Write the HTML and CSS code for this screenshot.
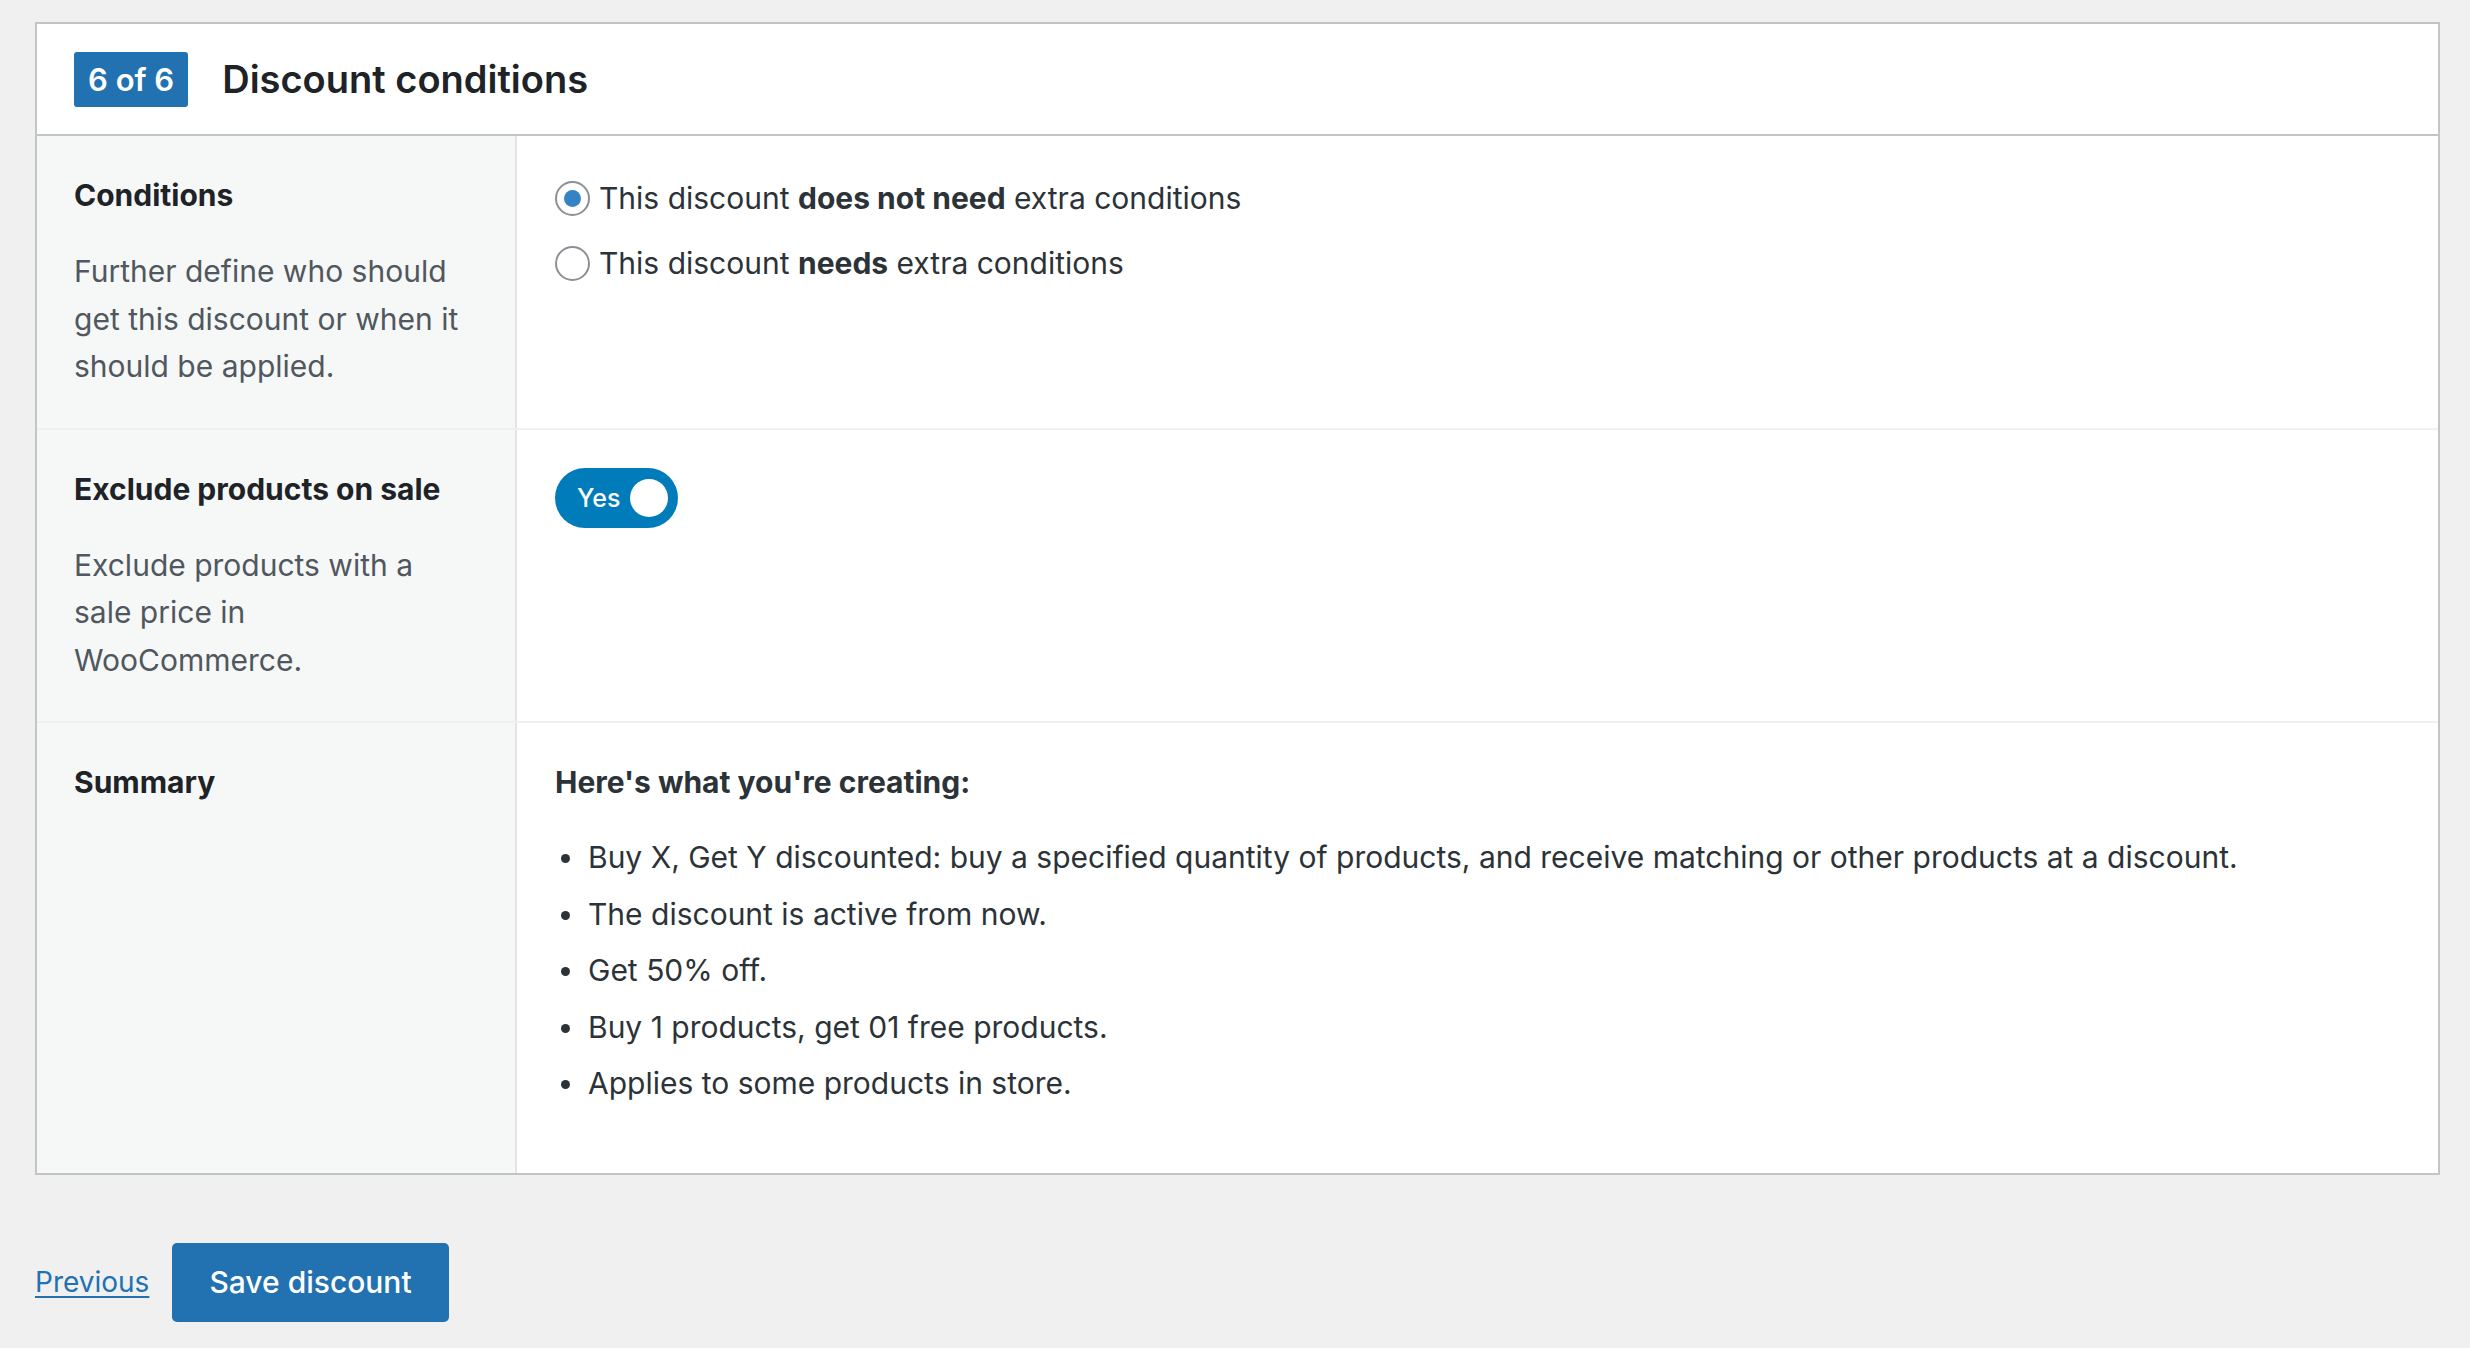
FILE: index.html
```html
<!DOCTYPE html>
<html lang="en">
<head>
<meta charset="utf-8">
<title>Discount conditions</title>
<link rel="stylesheet" href="styles.css">
</head>
<body>
<div class="wrap">
  <section class="card">
    <header class="card-header">
      <span class="step-badge">6 of 6</span>
      <h2 class="card-title">Discount conditions</h2>
    </header>

    <div class="row">
      <div class="row-label">
        <h3 class="label-title">Conditions</h3>
        <p class="label-desc">Further define who should get this discount or when it should be applied.</p>
      </div>
      <div class="row-field radio-field">
        <label class="radio-option">
          <span class="radio radio-checked"></span>
          <span>This discount <strong>does not need</strong> extra conditions</span>
        </label>
        <label class="radio-option">
          <span class="radio"></span>
          <span>This discount <strong>needs</strong> extra conditions</span>
        </label>
      </div>
    </div>

    <div class="row">
      <div class="row-label">
        <h3 class="label-title">Exclude products on sale</h3>
        <p class="label-desc">Exclude products with a sale price in WooCommerce.</p>
      </div>
      <div class="row-field toggle-field">
        <span class="toggle">
          <span class="toggle-text">Yes</span>
          <span class="toggle-knob"></span>
        </span>
      </div>
    </div>

    <div class="row row-last">
      <div class="row-label">
        <h3 class="label-title">Summary</h3>
      </div>
      <div class="row-field summary">
        <h4 class="summary-title">Here's what you're creating:</h4>
        <ul class="summary-list">
          <li>Buy X, Get Y discounted: buy a specified quantity of products, and receive matching or other products at a discount.</li>
          <li>The discount is active from now.</li>
          <li>Get 50% off.</li>
          <li>Buy 1 products, get 01 free products.</li>
          <li>Applies to some products in store.</li>
        </ul>
      </div>
    </div>
  </section>

  <div class="footer-actions">
    <a class="prev-link" href="#">Previous</a>
    <button class="save-btn" type="button">Save discount</button>
  </div>
</div>
</body>
</html>
```

FILE: styles.css
```css
* { box-sizing: border-box; }

html, body {
  margin: 0;
  padding: 0;
  background: #f0f0f1;
}

body {
  font-family: Inter, "Noto Sans", "Liberation Sans", sans-serif;
  color: #2c3338;
  font-size: 31px;
}

.wrap {
  padding: 22px 30px 0 35px;
}

.card {
  background: #fff;
  border: 2px solid #c3c4c7;
}

.card-header {
  display: flex;
  align-items: center;
  height: 112px;
  padding-left: 37px;
  border-bottom: 2px solid #c3c4c7;
  gap: 34px;
}

.step-badge {
  background: #2271b1;
  color: #fff;
  font-size: 31px;
  font-weight: 600;
  height: 55px;
  line-height: 55px;
  padding: 0 14px;
  border-radius: 3px;
}

.card-title {
  margin: 0;
  font-size: 38px;
  font-weight: 600;
  color: #1d2327;
}

.row {
  display: grid;
  grid-template-columns: 480px 1fr;
  border-bottom: 2px solid #f0f0f1;
}

.row-last { border-bottom: 0; }

.row-label {
  background: #f6f7f7;
  border-right: 2px solid #e2e4e7;
  padding: 39px 37px 37px 37px;
}

.label-title {
  margin: 0;
  font-size: 30px;
  font-weight: 700;
  line-height: 41px;
  color: #1d2327;
}

.label-desc {
  margin: 32px 0 0;
  font-size: 30px;
  line-height: 47.5px;
  color: #50575e;
}

.row-field {
  padding: 39px 37px 37px 38px;
}

.radio-field {
  padding-top: 42px;
}

.radio-option {
  display: flex;
  align-items: center;
  gap: 9px;
  font-size: 30px;
  line-height: 41px;
  margin-bottom: 24px;
}

.radio-option strong { font-weight: 700; }

.radio {
  width: 35px;
  height: 35px;
  border-radius: 50%;
  border: 2px solid #8c8f94;
  background: #fff;
  display: inline-flex;
  align-items: center;
  justify-content: center;
  flex: none;
}

.radio-checked::after {
  content: "";
  width: 17px;
  height: 17px;
  border-radius: 50%;
  background: #3582c4;
}

.toggle-field {
  display: flex;
  align-items: flex-start;
  padding-top: 38px;
}

.toggle {
  display: inline-flex;
  align-items: center;
  justify-content: space-between;
  width: 123px;
  height: 60px;
  border-radius: 30px;
  background: #007cba;
  padding: 0 10px 0 22px;
}

.toggle-text {
  color: #fff;
  font-size: 25px;
  font-weight: 500;
}

.toggle-knob {
  width: 38px;
  height: 38px;
  border-radius: 50%;
  background: #fff;
}

.summary {
  padding-bottom: 55px;
}

.summary-title {
  margin: 0;
  font-size: 30px;
  font-weight: 700;
  line-height: 41px;
}

.summary-list {
  list-style: none;
  margin: 32px 0 0;
  padding: 0;
}

.summary-list li {
  position: relative;
  padding-left: 33px;
  font-size: 30px;
  line-height: 44px;
  margin-bottom: 12.5px;
}

.summary-list li::before {
  content: "";
  position: absolute;
  left: 6px;
  top: 19px;
  width: 9px;
  height: 9px;
  border-radius: 50%;
  background: #2c3338;
}

.footer-actions {
  display: flex;
  align-items: center;
  gap: 23px;
  margin-top: 68px;
}

.prev-link {
  color: #2271b1;
  font-size: 28px;
  text-decoration: underline;
  text-underline-offset: 4px;
}

.save-btn {
  background: #2271b1;
  color: #fff;
  border: 0;
  border-radius: 5px;
  height: 79px;
  padding: 0 37px;
  font-family: inherit;
  font-size: 30px;
  font-weight: 500;
}
```
